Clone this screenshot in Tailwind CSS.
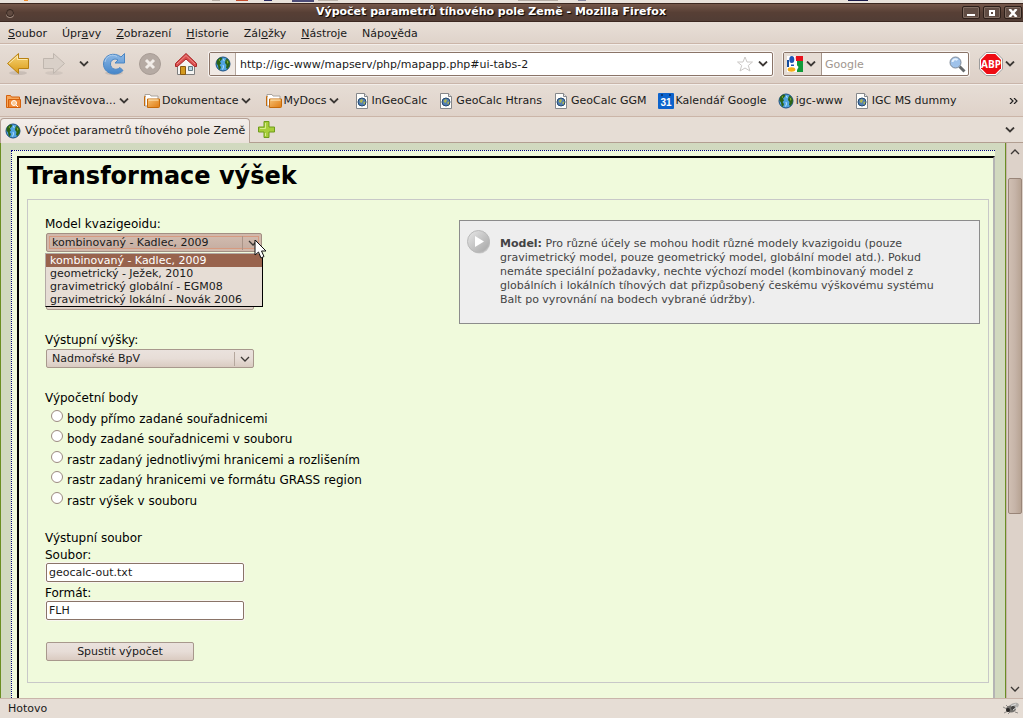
<!DOCTYPE html>
<html lang="cs">
<head>
<meta charset="utf-8">
<meta name="viewport" content="width=device-width, initial-scale=1">
<title>Výpočet parametrů tíhového pole Země - Mozilla Firefox</title>
<script src="https://cdn.jsdelivr.net/npm/@tailwindcss/browser@4"></script>
</head>
<body class="flex h-screen flex-col overflow-hidden bg-[#e6ddd5] font-['DejaVu_Sans',sans-serif] text-[11px] leading-4 text-[#1a1a1a]">

<svg class="absolute size-0" aria-hidden="true">
  <defs>
    <linearGradient id="gold" x2="0" y2="1"><stop stop-color="#f9d779"/><stop offset="1" stop-color="#d99a17"/></linearGradient>
    <linearGradient id="folder" x2="1" y2="1"><stop stop-color="#fbd38c"/><stop offset="1" stop-color="#e07b12"/></linearGradient>
    <linearGradient id="blue" x2="0" y2="1"><stop stop-color="#8fb9e6"/><stop offset="1" stop-color="#4485c9"/></linearGradient>
    <linearGradient id="silver" x2="1" y2="1"><stop stop-color="#e8e8e8"/><stop offset="1" stop-color="#a4a4a4"/></linearGradient>
    <symbol id="chev" viewBox="0 0 10 6"><path d="M1 .5l4 4 4-4" fill="none" stroke="#3c3835" stroke-width="1.800"/></symbol>
    <symbol id="thin" viewBox="0 0 10 6"><path d="M1 1l4 4 4-4" fill="none" stroke="#3c3835" stroke-width="1.300"/></symbol>
    <symbol id="earth" viewBox="0 0 16 16">
      <circle cx="8" cy="8" r="7" fill="#4fa3e0" stroke="#1a4c80"/>
      <path d="M2 4L5 1.500 7.500 2 6.500 4 5 5.500 6 7.500 4.500 9 6 11 5 14 3.500 12.500 3 9.500 1.500 7.500zM10.500 2l2.500 1.500 2 3.500-.5 3-2 3-1.500-1 .5-3-1.500-2 .5-3 1-1z" fill="#2c6417"/>
      <path d="M3.500 4l1.500-1 0 2zM11.500 4l2 2-1 2zM4 10.500l1.500 1" fill="#8fb53c"/>
      <path d="M8 3q1.500.5 1 2M8 9l.5 2-1 2.500" fill="none" stroke="#b5e2f9"/>
    </symbol>
    <symbol id="fold" viewBox="0 0 16 16">
      <path d="M1 1.500h5l1 1.500h7v10H1z" fill="#fff" stroke="#a8a29c"/>
      <path d="M.5 13V3.500h1M3.500 14.500h11a1 1 0 0 0 1-1V6H3.500z" fill="url(#folder)" stroke="#c56a0a"/>
      <path d="M4.500 7h10" stroke="#fff0c8"/>
    </symbol>
    <symbol id="page" viewBox="0 0 16 16">
      <path d="M2.500.5h8l3 3v12h-11z" fill="#fdfdfb" stroke="#85878a"/>
      <path d="M10.500.5v3h3" fill="#e6e6e6" stroke="#85878a"/>
      <circle cx="8" cy="9" r="4" fill="#527fb5" stroke="#24486f"/>
      <path d="M5.500 8l2-2 1.500 1-1 2.500-1 .5zM9.500 9l2-.5-1 3-1-.5z" fill="#b1b74c"/>
    </symbol>
  </defs>
</svg>

<!-- desktop panel edge -->
<div class="flex h-[3px] shrink-0 items-start bg-[#e9e2db]">
  <span class="ml-6 h-px w-1 bg-[#ef8b2c]"></span>
  <span class="ml-[184px] h-px w-2 bg-[#b5aca5]"></span>
  <span class="ml-4 h-px w-3 bg-[#c24d2e]"></span>
  <span class="ml-4 h-px w-2 bg-[#2b2b63]"></span>
  <span class="ml-5 h-0.5 w-[22px] bg-[#4c4c78]"></span>
  <span class="ml-1 h-px w-5 bg-[#bcb3ab]"></span>
  <span class="ml-[180px] h-px w-10 bg-[#b5aca5]"></span>
  <span class="ml-5 h-px w-2 bg-[#8888a0]"></span>
  <span class="ml-[262px] h-px w-5 bg-[#1b1b4b]"></span>
</div>

<header class="flex h-[19px] shrink-0 items-center border-y border-[#3c2820] bg-linear-to-b from-[#75574a] via-[#573f35] to-[#513d35] pr-px">
  <button aria-label="Nabídka okna" class="ml-1.5 size-2 rounded-full border border-[#33231c] bg-[#604a40] shadow-[0_1px_0_#a08a7e]"></button>
  <h1 class="min-w-0 flex-1 truncate pl-1.5 pb-0.5 text-center font-bold text-white [text-shadow:1px_1px_1px_#000]">Výpočet parametrů tíhového pole Země - Mozilla Firefox</h1>
  <div class="flex gap-[3px]">
    <button aria-label="Minimalizovat" class="flex h-[13px] w-[18px] items-center justify-center rounded-xs border border-[#2d1f19] bg-[#604c43] shadow-[inset_0_0_0_1px_#806c61]"><svg viewBox="0 0 10 8" class="h-2 w-2.5"><path d="M1 5h8v2H1z" fill="#fff"/></svg></button>
    <button aria-label="Maximalizovat" class="flex h-[13px] w-[18px] items-center justify-center rounded-xs border border-[#2d1f19] bg-[#604c43] shadow-[inset_0_0_0_1px_#806c61]"><svg viewBox="0 0 10 8" class="h-2 w-2.5"><path d="M3 2h4v4H3z" fill="none" stroke="#fff" stroke-width="2"/></svg></button>
    <button aria-label="Zavřít" class="flex h-[13px] w-[18px] items-center justify-center rounded-xs border border-[#2d1f19] bg-[#604c43] shadow-[inset_0_0_0_1px_#806c61]"><svg viewBox="0 0 10 8" class="h-2 w-2.5"><path d="M1.500 0l7 8M8.500 0l-7 8" stroke="#fff" stroke-width="2.500"/></svg></button>
  </div>
</header>

<nav class="flex h-[22px] shrink-0 items-center gap-[15px] border-b border-[#cbb5a8] bg-linear-to-b from-[#e8dfd7] to-[#dfd3ca] px-2 pt-0.5">
  <button><u>S</u>oubor</button><button>Úpr<u>a</u>vy</button><button><u>Z</u>obrazení</button><button><u>H</u>istorie</button><button>Zál<u>o</u>žky</button><button><u>N</u>ástroje</button><button>Nápo<u>v</u>ěda</button>
</nav>

<div class="flex h-10 shrink-0 items-center border-t border-b border-t-[#f3eeea] border-b-[#c9b5aa] bg-linear-to-b from-[#e6ddd5] to-[#ddd0c7] pr-2 pl-[7px]">
  <button aria-label="Zpět"><svg viewBox="0 0 22 22" class="size-[22px]"><ellipse cx="11" cy="20" rx="9" ry="2" fill="#000" opacity=".1"/><path d="M.5 10.500L11.500.5v5h10v10h-10v5z" fill="url(#gold)" stroke="#b88010"/><path d="M2 10.500l8.500-7.500v3.500h10" fill="none" stroke="#fceab0"/></svg></button>
  <button aria-label="Vpřed" class="ml-3.5"><svg viewBox="0 0 22 22" class="size-[22px]"><ellipse cx="11" cy="20" rx="9" ry="2" fill="#000" opacity=".06"/><path d="M21.500 10.500L10.500.5v5H.5v10h10v5z" fill="#d9d0c8" stroke="#bfb6ae"/></svg></button>
  <button aria-label="Historie stránek" class="ml-3.5"><svg class="h-1.5 w-2.5"><use href="#chev"/></svg></button>
  <button aria-label="Obnovit" class="ml-3.5"><svg viewBox="0 0 22 22" class="size-[22px]"><ellipse cx="11" cy="20" rx="9" ry="2" fill="#000" opacity=".1"/><path d="M21.500.5v9.500h-9.500l3-3c-3-2-7.500-.5-7.500 4 0 5 6 7 9.500 3.500l3 3C13 24.500.5 20.500.5 11 .5 1.500 11.500-1.500 18 4z" fill="url(#blue)" stroke="#4a86c4"/><path d="M2 9C3 3 9 .5 14 3.500" fill="none" stroke="#a9cbec"/></svg></button>
  <button aria-label="Zastavit" class="ml-3.5"><svg viewBox="0 0 22 22" class="size-[22px]"><circle cx="11" cy="11" r="10.500" fill="#b5aaa3" stroke="#a79c95"/><path d="M7 7l8 8M15 7l-8 8" stroke="#f1ece8" stroke-width="3"/></svg></button>
  <button aria-label="Domů" class="ml-3.5"><svg viewBox="0 0 22 22" class="size-[22px]"><path d="M2.500 10v11.500h17V10L11 3z" fill="#f5f4f2" stroke="#7e7e7e"/><path d="M5.500 13.500h5v8h-5z" fill="#d39a1f" stroke="#8a5a10"/><path d="M13.500 13.500h4v4h-4z" fill="#b6d4df" stroke="#637a82"/><path d="M11 .5L.5 10.500v3h2L11 6l8.500 7.500h2v-3z" fill="#d94e4e" stroke="#a92626"/><path d="M2 11l9-8.500 9 8.500" fill="none" stroke="#ef8e8a"/></svg></button>

  <form class="ml-3 flex h-6 min-w-0 flex-1 items-center rounded-xs border border-[#8a7468] bg-white shadow-[0_0_0_1px_#f7f3f0]">
    <span class="flex h-full w-[26px] shrink-0 items-center justify-center border-r border-[#b5a79e] bg-[#f0e9e4]"><svg class="size-4"><use href="#earth"/></svg></span>
    <input aria-label="Adresa" value="http://igc-www/mapserv/php/mapapp.php#ui-tabs-2" class="h-full min-w-0 flex-1 pl-1 outline-none">
    <button type="button" aria-label="Přidat do záložek"><svg viewBox="0 0 16 16" class="size-4"><path d="M8 1l2 5h5.500l-4.200 3.500L13 15 8 12l-5 3 1.700-5.500L.5 6H6z" fill="#fff" stroke="#cbc8c6"/></svg></button>
    <button type="button" aria-label="Zobrazit historii adres" class="mr-1 ml-[5px]"><svg class="h-1.5 w-2.5"><use href="#chev"/></svg></button>
  </form>

  <form class="ml-[10px] flex h-6 w-[186px] shrink-0 items-center rounded-xs border border-[#8a7468] bg-white shadow-[0_0_0_1px_#f7f3f0]">
    <button type="button" aria-label="Vyhledávač" class="flex h-full w-[38px] shrink-0 items-center gap-[3px] border-r border-[#a4948a] bg-[#e6ddd5] pl-[3px]">
      <svg viewBox="0 0 16 16" class="size-4 shrink-0"><path fill="#fff" d="M0 0h16v16H0z"/><path d="M8.500 0H16v5H9z" fill="#e8101c"/><path d="M10 5h6v11h-6z" fill="#119a3a"/><path d="M0 4h2v7H0z" fill="#134b9c"/><path d="M9 0l-1 2 1 3-1 2 3.500 4-2.500 5H8V0z" fill="#fff"/><ellipse cx="4.800" cy="3.500" rx="2.500" ry="3.500" fill="#1e55b5"/><ellipse cx="4.500" cy="13.500" rx="3.800" ry="2.200" fill="#f6ae16"/><path d="M4 8.500h3v1.500H4z" fill="#1e55b5"/></svg>
      <svg class="h-1.5 w-2.5 shrink-0"><use href="#chev"/></svg>
    </button>
    <input aria-label="Hledat" placeholder="Google" class="h-full min-w-0 flex-1 pl-[3px] outline-none placeholder:text-[#a0968e]">
    <button type="button" aria-label="Spustit hledání" class="mr-0.5"><svg viewBox="0 0 17 17" class="size-[17px]"><path d="M10.500 10.500l5 5" stroke="#66696b" stroke-width="3"/><circle cx="6.500" cy="6.500" r="5.500" fill="#9fc2ea" stroke="#7f8a98"/><path d="M3.500 6a3 3 0 0 1 5-2" fill="none" stroke="#e6f2ff" stroke-width="2"/></svg></button>
  </form>
  <button aria-label="Adblock Plus" class="ml-[10px] shrink-0"><svg viewBox="0 0 24 24" class="size-6"><path d="M7 .5h10l6.500 6.500v10L17 23.500H7L.5 17V7z" fill="#fff" stroke="#9b9b9b"/><path d="M7.700 2h8.600L22 7.700v8.600L16.300 22H7.700L2 16.300V7.700z" fill="#ee0c14"/><text x="12" y="16" text-anchor="middle" class="font-['Open_Sans',sans-serif] text-[10px] font-bold" fill="#fff">ABP</text></svg></button>
  <button aria-label="Nabídka Adblock" class="ml-0.5 shrink-0"><svg class="h-1.5 w-2.5"><use href="#chev"/></svg></button>
</div>

<div class="flex h-[33px] shrink-0 items-center border-t border-b border-t-[#f3eeea] border-b-[#cbb5a8] bg-linear-to-b from-[#e6ddd5] to-[#dfd2c9] px-[5px] whitespace-nowrap">
  <div class="mr-[15px] flex items-center gap-[15px]">
    <button class="flex items-center gap-[3px]"><svg viewBox="0 0 16 16" class="size-4"><path d="M1.500 14.500V2.500h4l1 1.500h8v10.500z" fill="#f7a85b" stroke="#d4610d"/><path d="M3.500 14.500v-8h12v8z" fill="#f08b38" stroke="#d4610d"/><circle cx="9" cy="10" r="2.500" fill="#fbc993" stroke="#fff"/><path d="M11 12l2 2" stroke="#fff"/></svg><span>Nejnavštěvova...</span><svg class="h-1.5 w-2.5"><use href="#chev"/></svg></button>
    <button class="flex items-center gap-0.5"><svg class="size-4"><use href="#fold"/></svg><span>Dokumentace</span><svg class="h-1.5 w-2.5"><use href="#chev"/></svg></button>
    <button class="flex items-center gap-0.5"><svg class="size-4"><use href="#fold"/></svg><span>MyDocs</span><svg class="h-1.5 w-2.5"><use href="#chev"/></svg></button>
  </div>
  <div class="flex items-center gap-[11px]">
    <a href="#ingeocalc" class="flex items-center gap-0.5"><svg class="size-4"><use href="#page"/></svg>InGeoCalc</a>
    <a href="#htrans" class="flex items-center gap-0.5"><svg class="size-4"><use href="#page"/></svg>GeoCalc Htrans</a>
    <a href="#ggm" class="flex items-center gap-0.5"><svg class="size-4"><use href="#page"/></svg>GeoCalc GGM</a>
    <a href="#kalendar" class="flex items-center gap-0.5"><svg viewBox="0 0 16 16" class="size-4"><rect width="16" height="16" rx="1" fill="#0d63cc"/><path d="M3 1h2v2H3zM11 1h2v2h-2z" fill="#063a80"/><text x="8" y="13" text-anchor="middle" class="font-['Liberation_Sans',sans-serif] text-[10px] font-bold" fill="#fff">31</text></svg>Kalendář Google</a>
    <a href="#igc" class="flex items-center gap-0.5"><svg class="size-4"><use href="#earth"/></svg>igc-www</a>
    <a href="#dummy" class="flex items-center gap-0.5"><svg class="size-4"><use href="#page"/></svg>IGC MS dummy</a>
  </div>
  <button aria-label="Další záložky" class="ml-auto"><svg viewBox="0 0 9 6" class="h-1.5 w-[9px]"><path d="M1 0l3 3-3 3M5 0l3 3-3 3" fill="none" stroke="#222" stroke-width="1.200"/></svg></button>
</div>

<div class="flex h-[26px] shrink-0 items-center border-b border-[#b29e91] bg-[#e6ddd5] pr-2">
  <button class="mt-0.5 flex h-[26px] items-center gap-1 rounded-t-sm border border-b-0 border-[#b5a196] bg-linear-to-b from-[#f3eeea] to-[#eae1da] pr-1 pl-1"><svg class="size-4"><use href="#earth"/></svg><span>Výpočet parametrů tíhového pole Země</span></button>
  <button aria-label="Nový panel" class="ml-2"><svg viewBox="0 0 17 17" class="size-[17px]"><path d="M6 .5h5V6h5.500v5H11v5.500H6V11H.5V6H6z" fill="#a8ce3a" stroke="#6f9c1b"/><path d="M7.500 2v5.500H2M7.500 12v3" fill="none" stroke="#d6ec8e"/></svg></button>
  <button aria-label="Seznam panelů" class="ml-auto"><svg class="h-1.5 w-2.5"><use href="#chev"/></svg></button>
</div>

<div class="flex min-h-0 flex-1">
  <main id="page-content" class="min-w-0 flex-1 overflow-hidden border-x border-[#6b8e23] bg-[#d1d9bf] pt-[7px] pr-2.5 pl-2.5 text-[12px] text-black">
    <div class="h-full border-t border-l border-dotted border-[#000080] bg-[#f0fadc] pt-[5px] pl-[5px]">
      <div class="h-full border-t-2 border-r-2 border-l-2 border-t-black border-r-[#b4b4b4] border-l-black pr-1 pl-2">
        <h2 class="h-[41px] text-[24px] leading-9 font-bold">Transformace výšek</h2>
        <form class="flex items-start border border-[#c8c8c8] pt-4 pr-2 pb-[21px] pl-[17px]">
          <div class="w-[414px] shrink-0">
            <div class="relative">
              <label for="model" class="block">Model kvazigeoidu:</label>
              <div class="relative mt-px ml-px h-[19px] w-[216px]">
                <select id="model" class="block h-full w-full appearance-none rounded-xs border border-[#a28f84] bg-linear-to-b from-[#d3bdb1] to-[#c4aca0] pl-[5px] text-[11px] leading-4 text-[#1a1a1a] shadow-[inset_0_0_0_2px_#d1b9ac,inset_0_0_0_3px_#d69a80]"><option>kombinovaný - Kadlec, 2009</option><option>geometrický - Ježek, 2010</option><option>gravimetrický globální - EGM08</option><option>gravimetrický lokální - Novák 2006</option></select>
                <span class="pointer-events-none absolute top-[3px] right-0 flex h-3.5 w-5 items-center justify-center border-l border-[#aa9488]"><svg class="h-1.5 w-2.5"><use href="#thin"/></svg></span>
              </div>
              <ul role="listbox" aria-label="Model kvazigeoidu" class="absolute top-[37px] left-0 z-10 w-[218px] border border-t-[#b4aaa6] border-r-black border-b-black border-l-[#b4aaa6] bg-[#e6ddd5] text-[11px] leading-[13px] text-[#1a1a1a]">
                <li role="option" aria-selected="true" class="bg-[#98634d] pl-1 text-white">kombinovaný - Kadlec, 2009</li>
                <li role="option" class="pl-1">geometrický - Ježek, 2010</li>
                <li role="option" class="pl-1">gravimetrický globální - EGM08</li>
                <li role="option" class="pl-1">gravimetrický lokální - Novák 2006</li>
              </ul>
              <svg viewBox="0 0 13 20" class="pointer-events-none absolute top-[23px] left-[209px] z-20 h-5 w-[13px]"><path d="M1 1v15l3.500-3 2.500 6 3-1.500-2.500-5.500H12z" fill="#fff" stroke="#111"/></svg>
            </div>
            <select aria-label="Vstupní výšky" class="mt-[39px] ml-px block h-[19px] w-[208px] appearance-none rounded-xs border border-[#a8988d] bg-linear-to-b from-[#efe8e4] to-[#ddd0c6]"></select>
            <label for="out" class="mt-[22px] block">Výstupní výšky:</label>
            <div class="relative mt-px ml-px h-[19px] w-[208px]">
              <select id="out" class="block h-full w-full appearance-none rounded-xs border border-[#a8988d] bg-linear-to-b from-[#eae2dd] via-[#e7ddd7] to-[#dacbc1] pl-[5px] text-[11px] leading-4 text-[#1a1a1a]"><option>Nadmořské BpV</option></select>
              <span class="pointer-events-none absolute top-[3px] right-0 flex h-3.5 w-5 items-center justify-center border-l border-[#b5a79d]"><svg class="h-1.5 w-2.5"><use href="#thin"/></svg></span>
            </div>
            <fieldset class="mt-[22px]">
              <legend class="mb-[3px]">Výpočetní body</legend>
              <label class="flex h-5 items-center"><input type="radio" name="b" class="mr-1 mb-1.5 ml-1.5 size-3 appearance-none rounded-full border border-[#9c8a80] bg-white">body přímo zadané souřadnicemi</label>
              <label class="flex h-5 items-center"><input type="radio" name="b" class="mr-1 mb-1.5 ml-1.5 size-3 appearance-none rounded-full border border-[#9c8a80] bg-white">body zadané souřadnicemi v souboru</label>
              <label class="flex h-[21px] items-center"><input type="radio" name="b" class="mr-1 mb-1.5 ml-1.5 size-3 appearance-none rounded-full border border-[#9c8a80] bg-white">rastr zadaný jednotlivými hranicemi a rozlišením</label>
              <label class="flex h-5 items-center"><input type="radio" name="b" class="mr-1 mb-1.5 ml-1.5 size-3 appearance-none rounded-full border border-[#9c8a80] bg-white">rastr zadaný hranicemi ve formátu GRASS region</label>
              <label class="flex h-[21px] items-center"><input type="radio" name="b" class="mr-1 mb-1.5 ml-1.5 size-3 appearance-none rounded-full border border-[#9c8a80] bg-white">rastr výšek v souboru</label>
            </fieldset>
            <p class="mt-[19px]">Výstupní soubor</p>
            <label for="file" class="mt-px block">Soubor:</label>
            <input id="file" value="geocalc-out.txt" class="ml-px block h-[19px] w-[198px] rounded-xs border border-[#8a7468] bg-white pl-0.5 text-[11px] text-[#1a1a1a] shadow-[0_0_0_1px_#f9f6f0]">
            <label for="fmt" class="mt-[3px] block">Formát:</label>
            <input id="fmt" value="FLH" class="ml-px block h-[19px] w-[198px] rounded-xs border border-[#8a7468] bg-white pl-0.5 text-[11px] text-[#1a1a1a] shadow-[0_0_0_1px_#f9f6f0]">
            <button type="button" class="mt-[22px] ml-px block h-[19px] w-[148px] rounded-xs border border-[#a8988d] bg-linear-to-b from-[#eae2dd] via-[#e7ddd7] to-[#dacbc1] text-[11px] text-[#1a1a1a]">Spustit výpočet</button>
          </div>
          <aside class="mt-1 flex min-w-0 flex-1 gap-[9px] border border-[#8c8c8c] bg-[#eee] pt-[9px] pr-7 pb-4 pl-[7px] text-[11px] leading-[14px] text-[#444]">
            <svg viewBox="0 0 24 24" class="size-6 shrink-0"><circle cx="12.500" cy="13" r="10.500" fill="#000" opacity=".15"/><circle cx="11.500" cy="11.500" r="11" fill="url(#silver)" stroke="#b9b9b9"/><path d="M8 6l9 5.500L8 17z" fill="#fff"/></svg>
            <p class="pt-[7px]"><b>Model:</b> Pro různé účely se mohou hodit různé modely kvazigoidu (pouze gravimetrický model, pouze geometrický model, globální model atd.). Pokud nemáte speciální požadavky, nechte výchozí model (kombinovaný model z globálních i lokálních tíhových dat přizpůsobený českému výškovému systému Balt po vyrovnání na bodech vybrané údržby).</p>
          </aside>
        </form>
      </div>
    </div>
  </main>
  <div class="flex w-[17px] shrink-0 flex-col items-center border-l border-[#c5b3a8] bg-[#ddd2c9]" role="scrollbar" aria-label="Posuvník" aria-controls="page-content" aria-valuenow="5">
    <button aria-label="Nahoru" class="flex h-[35px] w-full justify-center pt-1.5"><svg class="h-1.5 w-2.5 rotate-180"><use href="#thin"/></svg></button>
    <div class="h-[336px] w-3.5 rounded-xs border border-[#998578] bg-linear-to-r from-[#d0bfb2] via-[#c6b4a8] to-[#b7a393]"></div>
    <button aria-label="Dolů" class="mt-auto flex h-4 w-full justify-center pt-1"><svg class="h-1.5 w-2.5"><use href="#thin"/></svg></button>
  </div>
</div>

<footer class="flex h-5 shrink-0 items-center justify-between border-t border-[#c9b5aa] bg-[#e6ddd5] pr-1 pl-2">
  <span>Hotovo</span>
  <svg viewBox="0 0 16 13" class="h-[13px] w-4"><path d="M0 5l4 2M1 11l4-2M5 12l2-2M12 10l3 1M3 3l3 3" stroke="#8d8a86"/><ellipse cx="11" cy="4" rx="5" ry="3" fill="#b0aeab" transform="rotate(-20 11 4)"/><ellipse cx="8" cy="7" rx="5" ry="3.500" fill="#72706d"/><circle cx="5" cy="8" r="2" fill="#262423"/><circle cx="10" cy="6" r="2" fill="#434140"/><path d="M8 4l5-2M10 8l4-3" stroke="#ddd"/></svg>
</footer>
</body>
</html>
